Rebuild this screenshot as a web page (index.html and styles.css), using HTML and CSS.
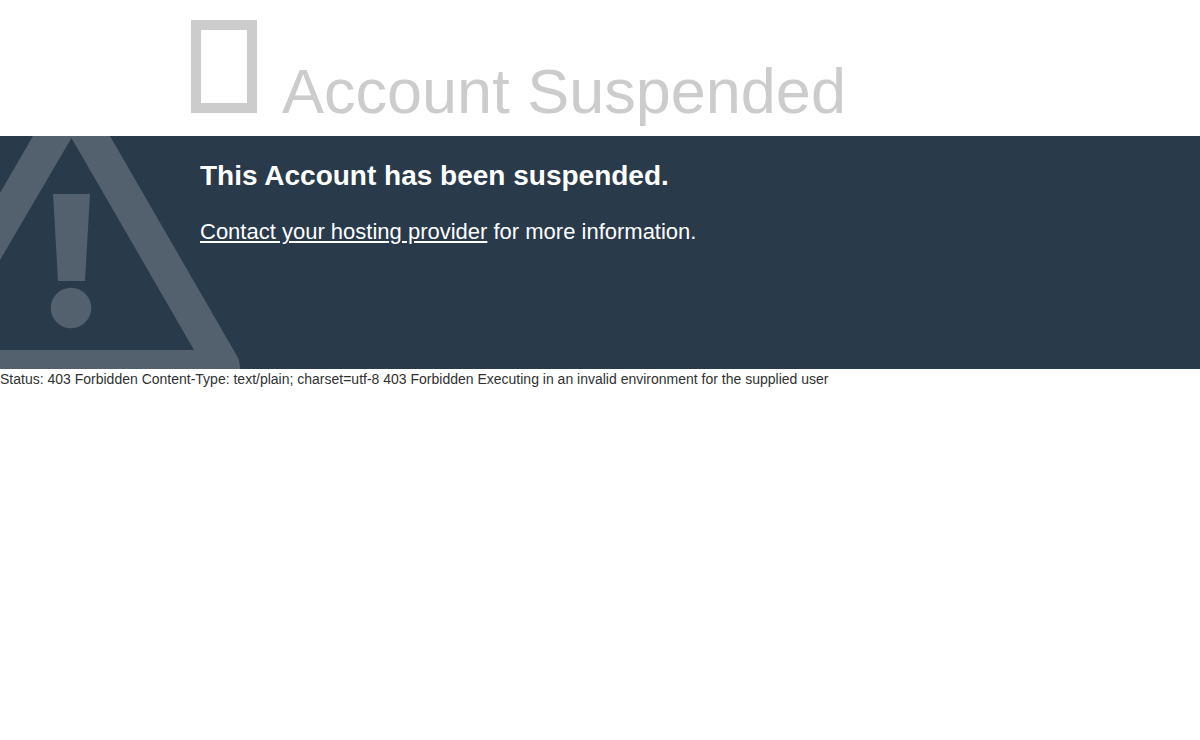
FILE: index.html
```
<!DOCTYPE html>
<html lang="en">
<head>
  <meta charset="UTF-8">
  <meta name="viewport" content="width=device-width, initial-scale=1.0">
  <title>Account Suspended</title>
  <link rel="stylesheet" href="styles.css">
</head>
<body>
  <header class="container status-reason">
    <svg class="glyph-box" viewBox="0 0 68 94" aria-hidden="true">
      <rect x="6" y="5" width="56" height="83"/>
    </svg>
    <h1 class="reason-text">Account Suspended</h1>
  </header>
  <section class="additional-info">
    <svg class="warning" viewBox="0 0 240 233" aria-hidden="true">
      <path fill-rule="evenodd" d="M33 0H110L237 220Q240 225 240 233H0V214H194L71.500 2L0 124V57Z"/>
      <path d="M53 58H90L85 145H58Z"/>
      <circle cx="71" cy="172" r="20.300"/>
    </svg>
    <div class="container info-items">
      <h2 class="info-heading">This Account has been suspended.</h2>
      <p class="info-text"><a href="#">Contact your hosting provider</a> for more information.</p>
    </div>
  </section>
  <p class="server-output">Status: 403 Forbidden Content-Type: text/plain; charset=utf-8 403 Forbidden Executing in an invalid environment for the supplied user</p>
</body>
</html>
```
FILE: styles.css
```
body {
  margin: 0;
  font-family: Arial, "Liberation Sans", Helvetica, sans-serif;
  font-size: 14px;
  line-height: 20px;
  color: #2f3230;
  background-color: #ffffff;
}
.container {
  box-sizing: border-box;
  width: 70%;
  margin: 0 auto;
}
.status-reason {
  display: flex;
  align-items: flex-end;
  gap: 24px;
  padding: 20px 10px 22px;
  color: #cccccc;
}
.glyph-box {
  flex: none;
  width: 68px;
  height: 94px;
  fill: none;
  stroke: #cccccc;
  stroke-width: 10px;
}
.reason-text {
  margin: 0;
  font-size: 63px;
  font-weight: normal;
  line-height: 46px;
}
.additional-info {
  position: relative;
  min-height: 233px;
  overflow: hidden;
  color: #ffffff;
  background-color: #293a4a;
}
/* Decorative sign behind the message */
.warning {
  position: absolute;
  top: 0;
  left: 0;
  width: 240px;
  height: 233px;
  fill: #53606d;
}
.info-items {
  position: relative;
  padding: 20px;
}
.info-heading {
  margin: 0;
  font-size: 28px;
  line-height: 40px;
}
.info-text {
  margin: 20px 0 0;
  font-size: 22px;
  line-height: 32px;
}
.info-text a {
  color: #ffffff;
}
.server-output {
  margin: 0;
}
```
